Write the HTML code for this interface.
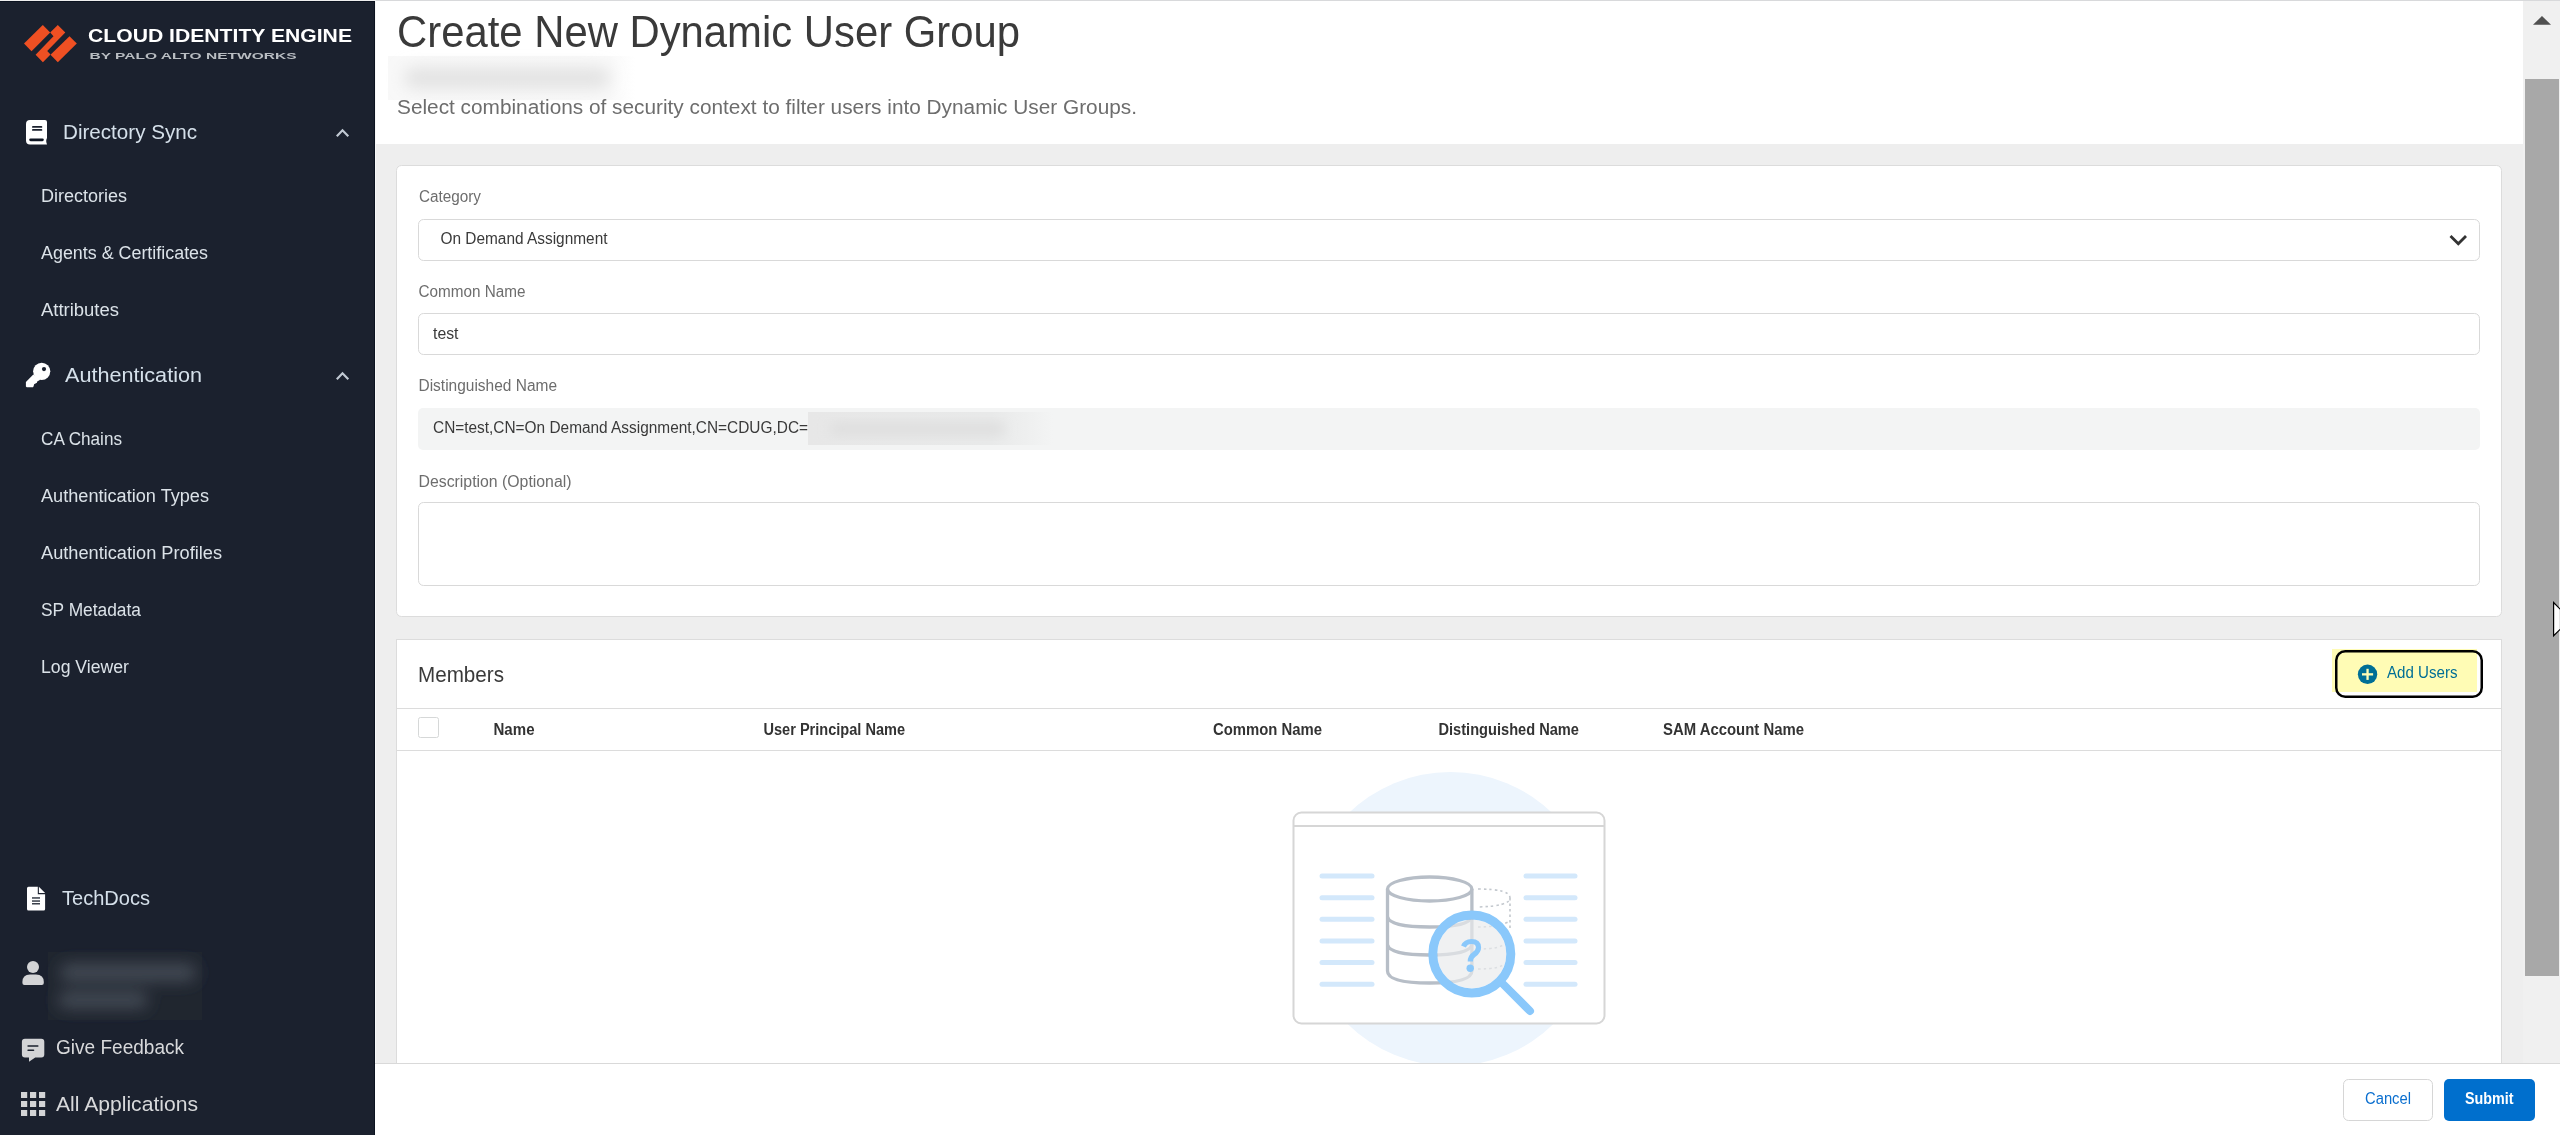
<!DOCTYPE html>
<html><head><meta charset="utf-8"><title>Create New Dynamic User Group</title>
<style>
html,body{margin:0;padding:0;width:2560px;height:1135px;overflow:hidden;background:#eeeeee;}
svg{display:block;position:absolute;left:0;top:0;}
text{font-family:"Liberation Sans",sans-serif;}
svg{opacity:0.999;}
</style></head>
<body>
<svg width="2560" height="1135" viewBox="0 0 2560 1135">
<defs>
  <filter id="b6" x="-20%" y="-50%" width="140%" height="200%"><feGaussianBlur stdDeviation="6"/></filter>
  <filter id="b8" x="-30%" y="-80%" width="160%" height="260%"><feGaussianBlur stdDeviation="8"/></filter>
  <linearGradient id="fadeR" x1="0" x2="1" y1="0" y2="0"><stop offset="0" stop-color="#f8f8f8"/><stop offset="0.9" stop-color="#f9f9f9"/><stop offset="1" stop-color="#ffffff"/></linearGradient>
  <linearGradient id="fadeDN" x1="0" x2="1" y1="0" y2="0"><stop offset="0" stop-color="#e7e7e7"/><stop offset="0.75" stop-color="#e8e9e9"/><stop offset="1" stop-color="#f3f4f4"/></linearGradient>
  <filter id="b4" x="-20%" y="-50%" width="140%" height="200%"><feGaussianBlur stdDeviation="4"/></filter>
</defs>
<!-- page background -->
<rect x="0" y="0" width="2560" height="1135" fill="#eeeeee"/>
<!-- header white -->
<rect x="375" y="0" width="2148" height="144" fill="#ffffff"/>
<rect x="0" y="0" width="2560" height="1" fill="#d8d9db"/>

<!-- SIDEBAR -->
<rect x="0" y="0" width="376" height="1" fill="#efefef"/>
<rect x="0" y="1" width="375" height="1134" fill="#1b212e"/>
<rect x="0" y="1" width="375" height="1" fill="#0c1320"/>
<rect x="374" y="1" width="1" height="1134" fill="#0c1320"/>
<rect x="375" y="1" width="1" height="1134" fill="#f7f7f7"/>
<!-- logo -->
<g fill="#ef5023">
  <polygon points="24.0,43.6 42.8,25.0 50.2,32.6 31.5,51.2"/>
  <polygon points="57.8,25.0 65.3,32.6 47.2,50.9 50.5,54.5 42.9,62.2 35.6,54.7 53.5,36.3 50.2,32.6"/>
  <polygon points="69.5,36.3 76.8,43.6 57.8,62.2 50.5,54.7"/>
</g>
<text x="88" y="42" font-size="18" font-weight="bold" fill="#ffffff" textLength="264" lengthAdjust="spacingAndGlyphs">CLOUD IDENTITY ENGINE</text>
<text x="89.5" y="59.3" font-size="9.7" font-weight="bold" fill="#b9bdc2" textLength="207" lengthAdjust="spacingAndGlyphs">BY PALO ALTO NETWORKS</text>

<!-- Directory Sync -->
<g>
  <path d="M30,120 H45 Q47,120 47,122 V138 L46.4,139.5 Q46,141 46.4,142.5 L47,144.5 H30 Q26,144.5 26,140.5 V124 Q26,120 30,120 Z" fill="#ffffff"/>
  <rect x="32" y="126" width="10.3" height="1.8" rx="0.9" fill="#1b212e"/>
  <rect x="32" y="129" width="10.3" height="1.8" rx="0.9" fill="#1b212e"/>
  <rect x="29.2" y="138.4" width="14.6" height="2.8" rx="1.4" fill="#0e1522"/>
</g>
<text x="63" y="139" font-size="20.5" fill="#d5e0ea" textLength="134" lengthAdjust="spacingAndGlyphs">Directory Sync</text>
<polyline points="336.8,136.2 342.5,130.3 348.3,136.2" fill="none" stroke="#c1c9d3" stroke-width="2.2"/>
<g font-size="18" fill="#dbe2e8">
  <text x="41" y="202" textLength="86" lengthAdjust="spacingAndGlyphs">Directories</text>
  <text x="41" y="258.5" textLength="167" lengthAdjust="spacingAndGlyphs">Agents &amp; Certificates</text>
  <text x="41" y="316" textLength="78" lengthAdjust="spacingAndGlyphs">Attributes</text>
</g>
<!-- Authentication -->
<g fill="#ffffff">
  <circle cx="41.7" cy="371.3" r="8.6"/>
  <polygon points="33.3,374.4 40.3,379.7 37.2,381.4 36.9,382.8 34.1,384.2 33.6,386.2 33,387.3 26.8,387.3 25.9,386.4 25.9,382"/>
</g>
<circle cx="44" cy="369.1" r="2.1" fill="#1b212e"/>
<text x="65" y="382" font-size="20.5" fill="#d5e0ea" textLength="137" lengthAdjust="spacingAndGlyphs">Authentication</text>
<polyline points="336.8,379.2 342.5,373.3 348.3,379.2" fill="none" stroke="#c1c9d3" stroke-width="2.2"/>
<g font-size="18" fill="#dbe2e8">
  <text x="41" y="445" textLength="81" lengthAdjust="spacingAndGlyphs">CA Chains</text>
  <text x="41" y="502" textLength="168" lengthAdjust="spacingAndGlyphs">Authentication Types</text>
  <text x="41" y="559" textLength="181" lengthAdjust="spacingAndGlyphs">Authentication Profiles</text>
  <text x="41" y="616" textLength="100" lengthAdjust="spacingAndGlyphs">SP Metadata</text>
  <text x="41" y="673" textLength="88" lengthAdjust="spacingAndGlyphs">Log Viewer</text>
</g>
<!-- TechDocs -->
<path d="M28.5,886.8 H37.8 V894.2 H45.1 V909 Q45.1,910.5 43.6,910.5 H28.5 Q27,910.5 27,909 V888.3 Q27,886.8 28.5,886.8 Z" fill="#ffffff"/>
<polygon points="38.9,886.8 45.1,893.1 38.9,893.1" fill="#ffffff"/>
<g fill="#3a404b">
  <rect x="32" y="897.2" width="8" height="1.5"/>
  <rect x="32" y="900.3" width="8" height="1.5"/>
  <rect x="32" y="903" width="8" height="1.5"/>
</g>
<text x="62" y="905" font-size="20.5" fill="#d5e0ea" textLength="88" lengthAdjust="spacingAndGlyphs">TechDocs</text>
<!-- user -->
<g fill="#d3d4d6">
  <circle cx="33" cy="967" r="6"/>
  <path d="M22.4,983 V982 Q22.4,974.4 30,974.4 H36 Q43.8,974.4 43.8,982 V983 Q43.8,985 41.8,985 H24.4 Q22.4,985 22.4,983 Z"/>
</g>
<rect x="48" y="952" width="154" height="68" fill="#20262f"/>
<g filter="url(#b8)" fill="#454c56">
  <rect x="60" y="964" width="136" height="17" rx="8"/>
  <rect x="58" y="992" width="90" height="16" rx="8"/>
</g>
<!-- Give Feedback -->
<path d="M25,1038.8 H41.3 Q44.3,1038.8 44.3,1041.8 V1054.6 Q44.3,1057.6 41.3,1057.6 H35.2 L29,1061.8 V1057.6 H25 Q21.9,1057.6 21.9,1054.6 V1041.8 Q21.9,1038.8 25,1038.8 Z" fill="#d3d4d6"/>
<rect x="27.3" y="1045.2" width="11.3" height="1.6" rx="0.8" fill="#1b212e"/>
<rect x="27.3" y="1049.4" width="7" height="1.6" rx="0.8" fill="#1b212e"/>
<text x="56" y="1054" font-size="20.5" fill="#d8d9db" textLength="128" lengthAdjust="spacingAndGlyphs">Give Feedback</text>
<!-- All Applications -->
<g fill="#d3d4d6">
  <rect x="21" y="1092" width="6.2" height="6"/><rect x="30" y="1092" width="6.2" height="6"/><rect x="39" y="1092" width="6.2" height="6"/>
  <rect x="21" y="1101" width="6.2" height="6"/><rect x="30" y="1101" width="6.2" height="6"/><rect x="39" y="1101" width="6.2" height="6"/>
  <rect x="21" y="1110" width="6.2" height="6"/><rect x="30" y="1110" width="6.2" height="6"/><rect x="39" y="1110" width="6.2" height="6"/>
</g>
<text x="56" y="1111" font-size="20.5" fill="#d8d9db" textLength="142" lengthAdjust="spacingAndGlyphs">All Applications</text>

<!-- MAIN HEADER -->
<text x="397" y="47" font-size="44" fill="#3a3a3a" textLength="623" lengthAdjust="spacingAndGlyphs">Create New Dynamic User Group</text>
<rect x="388" y="56" width="247" height="44" fill="url(#fadeR)"/>
<g filter="url(#b8)" fill="#e3e3e3">
  <rect x="404" y="67" width="206" height="22" rx="11"/>
</g>
<text x="397" y="114" font-size="20" fill="#6d6d6d" textLength="740" lengthAdjust="spacingAndGlyphs">Select combinations of security context to filter users into Dynamic User Groups.</text>

<!-- CARD 1 -->
<rect x="396.5" y="165.5" width="2105" height="451" rx="5" fill="#ffffff" stroke="#dcdcdc" stroke-width="1"/>
<text x="419" y="202" font-size="16" fill="#6d6d6d" textLength="62" lengthAdjust="spacingAndGlyphs">Category</text>
<rect x="418.5" y="219.5" width="2061" height="41" rx="5" fill="#ffffff" stroke="#d9d9d9" stroke-width="1"/>
<text x="440.5" y="244" font-size="16" fill="#3a3a3a" textLength="167" lengthAdjust="spacingAndGlyphs">On Demand Assignment</text>
<polyline points="2450.5,236 2458.3,243.8 2466,236" fill="none" stroke="#333333" stroke-width="2.8"/>
<text x="418.5" y="297" font-size="16" fill="#6d6d6d" textLength="107" lengthAdjust="spacingAndGlyphs">Common Name</text>
<rect x="418.5" y="313.5" width="2061" height="41" rx="5" fill="#ffffff" stroke="#d9d9d9" stroke-width="1"/>
<text x="433" y="339" font-size="16" fill="#3a3a3a" textLength="25.5" lengthAdjust="spacingAndGlyphs">test</text>
<text x="418.5" y="391" font-size="16" fill="#6d6d6d" textLength="138.5" lengthAdjust="spacingAndGlyphs">Distinguished Name</text>
<rect x="418" y="408" width="2062" height="42" rx="5" fill="#f3f4f4"/>
<text x="433" y="433" font-size="16" fill="#3a3a3a" textLength="375" lengthAdjust="spacingAndGlyphs">CN=test,CN=On Demand Assignment,CN=CDUG,DC=</text>
<rect x="808" y="412" width="245" height="33" fill="url(#fadeDN)"/>
<g filter="url(#b6)" fill="#dedede">
  <rect x="830" y="423" width="175" height="12" rx="6"/>
</g>
<text x="418.5" y="487" font-size="16" fill="#6d6d6d" textLength="153" lengthAdjust="spacingAndGlyphs">Description (Optional)</text>
<rect x="418.5" y="502.5" width="2061" height="83" rx="5" fill="#ffffff" stroke="#d9d9d9" stroke-width="1"/>

<!-- CARD 2 -->
<rect x="396.5" y="639.5" width="2105" height="520" fill="#ffffff" stroke="#dcdcdc" stroke-width="1"/>
<text x="418" y="682" font-size="22" fill="#3a3a3a" textLength="86" lengthAdjust="spacingAndGlyphs">Members</text>
<!-- add users button -->
<rect x="2336.25" y="651.25" width="145.5" height="45.5" rx="9" fill="#ffffff"/>
<rect x="2332" y="649" width="145" height="43" fill="#fffcb5"/>
<rect x="2336.25" y="651.25" width="145.5" height="45.5" rx="9" fill="none" stroke="#000000" stroke-width="2.5"/>
<circle cx="2367.55" cy="674.3" r="9.7" fill="#006f96"/>
<rect x="2362" y="673.2" width="11.1" height="2.3" fill="#fffcb5"/>
<rect x="2366.4" y="668.8" width="2.3" height="11.1" fill="#fffcb5"/>
<text x="2387" y="678" font-size="16" fill="#006f96" textLength="70.5" lengthAdjust="spacingAndGlyphs">Add Users</text>
<!-- table header -->
<rect x="397" y="708" width="2104" height="1" fill="#dcdcdc"/>
<rect x="397" y="750" width="2104" height="1" fill="#dcdcdc"/>
<rect x="418.5" y="717.5" width="20" height="20" rx="2" fill="#ffffff" stroke="#d6d8d8" stroke-width="1"/>
<g font-size="16" font-weight="bold" fill="#333333">
  <text x="493.5" y="735" textLength="41" lengthAdjust="spacingAndGlyphs">Name</text>
  <text x="763.5" y="735" textLength="141.5" lengthAdjust="spacingAndGlyphs">User Principal Name</text>
  <text x="1213" y="735" textLength="109" lengthAdjust="spacingAndGlyphs">Common Name</text>
  <text x="1438.5" y="735" textLength="140.5" lengthAdjust="spacingAndGlyphs">Distinguished Name</text>
  <text x="1663" y="735" textLength="141" lengthAdjust="spacingAndGlyphs">SAM Account Name</text>
</g>
<!-- empty state illustration -->
<circle cx="1450.5" cy="919" r="147" fill="#edf5fd"/>
<rect x="1293.5" y="812.5" width="311" height="211" rx="8" fill="#ffffff" stroke="#d6d6d6" stroke-width="2"/>
<rect x="1294" y="825" width="310" height="2" fill="#d6d6d6"/>
<g stroke="#d3e8fb" stroke-width="5" stroke-linecap="round">
  <line x1="1322" y1="876" x2="1372" y2="876"/><line x1="1322" y1="897.7" x2="1372" y2="897.7"/>
  <line x1="1322" y1="919.3" x2="1372" y2="919.3"/><line x1="1322" y1="941" x2="1372" y2="941"/>
  <line x1="1322" y1="962.6" x2="1372" y2="962.6"/><line x1="1322" y1="984.2" x2="1372" y2="984.2"/>
  <line x1="1526" y1="876" x2="1575" y2="876"/><line x1="1526" y1="897.7" x2="1575" y2="897.7"/>
  <line x1="1526" y1="919.3" x2="1575" y2="919.3"/><line x1="1526" y1="941" x2="1575" y2="941"/>
  <line x1="1526" y1="962.6" x2="1575" y2="962.6"/><line x1="1526" y1="984.2" x2="1575" y2="984.2"/>
</g>
<!-- dotted cylinder -->
<g fill="none" stroke="#c3c8ce" stroke-width="1.6" stroke-dasharray="2.5,3">
  <path d="M1478,889 Q1510,889 1510,898 Q1510,906 1478,907"/>
  <path d="M1510,898 V928"/>
  <path d="M1478,927 Q1500,927 1510,921"/>
  <path d="M1478,949 Q1500,949 1504,944"/>
  <path d="M1478,969 Q1500,969 1504,964"/>
</g>
<!-- cylinder -->
<g fill="none" stroke="#b7bec7" stroke-width="3.3">
  <ellipse cx="1429.7" cy="889" rx="42.2" ry="12"/>
  <path d="M1387.5,889 V971 Q1387.5,983 1429.7,983 Q1471.9,983 1471.9,971 V889"/>
  <path d="M1387.5,917 Q1390,927 1429.7,927 Q1469,927 1471.9,917"/>
  <path d="M1387.5,945 Q1390,955 1429.7,955 Q1469,955 1471.9,945"/>
</g>
<!-- magnifier -->
<circle cx="1471.8" cy="953.9" r="34.5" fill="#e9ebec" fill-opacity="0.68"/>
<circle cx="1471.8" cy="953.9" r="39" fill="none" stroke="#8ac8fb" stroke-width="9"/>
<line x1="1502" y1="983" x2="1530" y2="1011" stroke="#8ac8fb" stroke-width="8" stroke-linecap="round"/>
<path d="M1463.5,946.5 Q1465.5,941.5 1471.5,941.5 Q1478.5,941.5 1478.5,947.5 Q1478.5,951.5 1474,954.5 Q1470.3,957 1470.3,961.5" fill="none" stroke="#8ac8fb" stroke-width="5.2" stroke-linecap="butt"/>
<circle cx="1470.2" cy="968.3" r="3.7" fill="#8ac8fb"/>

<!-- FOOTER -->
<rect x="375" y="1063" width="2185" height="72" fill="#ffffff"/>
<rect x="375" y="1063" width="2185" height="1" fill="#d9d9d9"/>
<rect x="2343.5" y="1079.5" width="89" height="41" rx="5" fill="#ffffff" stroke="#d6d6d6" stroke-width="1"/>
<text x="2365" y="1104" font-size="16" fill="#0b6fcf" textLength="46" lengthAdjust="spacingAndGlyphs">Cancel</text>
<rect x="2444" y="1079" width="91" height="42" rx="5" fill="#006fcd"/>
<text x="2465" y="1104" font-size="16" font-weight="bold" fill="#ffffff" textLength="48.5" lengthAdjust="spacingAndGlyphs">Submit</text>

<!-- SCROLLBAR -->
<rect x="2523" y="1" width="37" height="1062" fill="#f0f0f0"/>
<polygon points="2533,24.7 2542,15.9 2551,24.7" fill="#505050"/>
<rect x="2525" y="79" width="34" height="897" fill="#a8a8a8"/>
<!-- cursor -->
<path d="M2553.6,602.5 L2560.5,609.5 V629 L2553.6,635.8 Z" fill="#ffffff" stroke="#000000" stroke-width="1.2"/>
</svg>
</body></html>
